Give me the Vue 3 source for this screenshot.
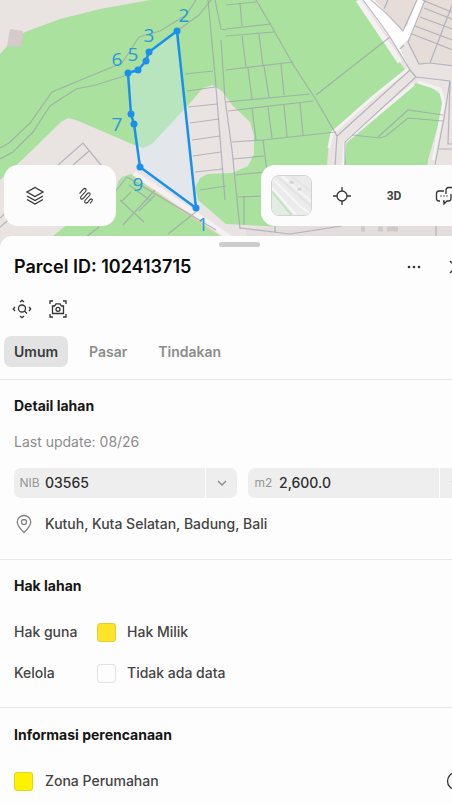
<script setup>
import { ref } from 'vue'

const tabs = ['Umum', 'Pasar', 'Tindakan']
const activeTab = ref('Umum')
const nib = ref('03565')
const area = ref('2,600.0')

const rights = [
  { label: 'Hak guna', value: 'Hak Milik', tone: 'amber' },
  { label: 'Kelola', value: 'Tidak ada data', tone: 'empty' },
]

const vertices = [
  [177, 31], [149, 52], [146, 61], [138, 70], [128, 73],
  [131, 114], [134, 124], [140, 167], [196, 208],
]
const outline = vertices.map(p => p.join(',')).join(' ')

const labels = [
  { n: '2', x: 184, y: 22 },
  { n: '3', x: 149, y: 42 },
  { n: '5', x: 133, y: 61 },
  { n: '6', x: 117, y: 66 },
  { n: '7', x: 117, y: 131 },
  { n: '9', x: 138, y: 191 },
  { n: '1', x: 203, y: 231 },
]
</script>

<template>
  <div class="viewport">
    <main class="page">
      <header class="map">
        <svg class="map-canvas" viewBox="0 0 479 250" preserveAspectRatio="xMinYMin slice" aria-hidden="true">
          <rect width="479" height="250" fill="#e9e3e2" />

          <!-- vegetation -->
          <g fill="#aae19f">
            <path d="M0 54 10 43 25 32 60 19 100 9 150 0H358L368 14 391 50 406 71 370 100 333 132 329 140 327 165V226L300 228 226 224 198 200 195 188 200 178 208 174 232 173 248 166 254 154V136L250 122 232 105 222 91 212 85 203 88 190 103 152 144 143 148 132 144 76 120 68 118 61 122 24 158 0 180Z" />
            <path d="M52 237 70 222 116 190 118 182 122 177 131 174 139 180 222 237Z" />
            <path d="M344 226V144L357 133 386 109 409 86 417 83 429 86 440 94 442 104 438 125 428 160 424 200V226Z" />
          </g>
          <path d="M10 29 23 31 21 47 7 46Z" fill="#d6cbcb" />
          <path d="M246 237V230L300 224H479V237Z" fill="#e4dddd" />

          <!-- roads -->
          <g fill="none" stroke="#f5f1f2">
            <path d="M134 173 196 214 232 239" stroke-width="5" />
            <path d="M408 69 372 98 332 133 329 148" stroke-width="3" />
            <path d="M414 84 345 142 343 165" stroke-width="3" />
            <path d="M358 0 381 34 400 62" stroke-width="5" />
            <path d="M418 82 440 89 444 102 433 160" stroke-width="3" />
          </g>
          <path d="M407 42 425 0H479V67L430 62 419 64Z" fill="#e6ddd9" />
          <path d="M373 0H417L404 30Z" fill="#e6dcd8" />
          <path d="M362 0H374L386 12 402 30 407 26 417 0H425L410 38 400 47 404 58 410 69 390 37Z" fill="#fefefe" />
          <path d="M132 176 214 233" fill="none" stroke="#f3c8a5" stroke-width="1" />

          <!-- cadastral lines -->
          <g fill="none" stroke="#999daa" stroke-opacity=".66" stroke-width="1.2">
            <path d="M0 148 9 143 30 123 52 92 88 77 122 63 139 37 160 31 186 15 196 0" />
            <path d="M0 159 13 152 33 132 50 106 76 89 96 85 127 75 M177 31 199 15 211 0" />
            <path d="M58 165 83 143 101 165M73 165 89 151" />
            <path d="M208 0 215 75 225 200M215 0 221 29 226 30M221 40 225 99 232 150 240 229" />
            <path d="M185 74 213 71M187 91 215 87M188 107 217 104M190 123 219 119M192 140 220 136M193 156 221 152M195 172 223 169M200 190 226 186" />
            <path d="M226 5 256 2M226 29 271 24M226 36 274 32M226 70 293 62M226 102 310 94M228 111 313 101M232 142 263 140 336 132M233 159 264 156M235 175 264 172M238 197 263 196M240 228 290 234 341 226V210" />
            <path d="M240 3 242 26M256 0 272 27 294 66 315 98 337 136 335 166M242 36 246 67M259 34 263 66M248 68 252 99M264 66 269 97M281 64 284 95M252 108 256 140M268 107 272 138M284 105 287 137M300 103 303 135M263 140 265 156 267 172M244 196V225M275 225V232" />
            <path d="M316 95 390 37M363 0 381 24 390 37 410 70 337 136M410 70 416 77 345 142V165M416 77 450 81 444 118 435 165" />
            <path d="M352 135 380 138 386 136 408 118 443 121M378 137 408 110 443 115M450 82 448 144H479M479 149H439" />
            <path d="M371 0 386 13 403 31 417 0M388 0 384 9M425 0 408 42 419 64 430 63 479 69M400 49 404 45M424 8 479 30M420 17 479 39M415 26 479 50M412 34 479 60M422 0 454 13M454 0 430 63" />
            <path d="M115 192 127 177 216 230M129 185 151 201M120 200 144 222M122 201 131 192M139 211 155 195M155 190 123 225M197 211 168 234M86 237 99 227M0 218 12 207M0 227 20 210M436 226V237" />
          </g>
          <path d="M361 229H365M378 229H383M387 229H398" stroke="#d1c8c7" stroke-width="5" />

          <polygon :points="outline" fill="#d6edff" fill-opacity=".32" stroke="#1a90ec" stroke-width="2.500" stroke-linejoin="round" />
          <circle v-for="(p, i) in vertices" :key="i" :cx="p[0]" :cy="p[1]" r="3.5" fill="#1a90ec" />
          <text v-for="l in labels" :key="l.n" class="vertex-label" :x="l.x" :y="l.y">{{ l.n }}</text>
        </svg>

        <div class="toolbar layer-tools">
          <button class="tool" aria-label="Lapisan">
            <svg width="20" height="20" viewBox="0 0 20 20">
              <path d="M10 1.500 18 6 10 10.500 2 6ZM2 10 10 14.500 18 10M2 13.500 10 18 18 13.500" />
            </svg>
          </button>
          <button class="tool" aria-label="Gambar">
            <svg class="thin" width="16" height="18" viewBox="0 0 16 18">
              <path d="M1.500 6.500 5.500 2C7.500 .5 9 2.500 7.500 4.500L3 9.500C1.800 11.500 3.500 13 5.200 11.500L9.500 6.500C11.500 4.800 13 6.500 11.500 8.500L7 13.500C6 15.500 7.800 17 9.500 15.500L12 12.500C13.500 11.200 15 12.500 14 14L12 16.500" />
            </svg>
          </button>
        </div>

        <div class="toolbar view-tools">
          <button class="basemap" aria-label="Peta dasar">
            <svg viewBox="0 0 40 40">
              <rect width="40" height="40" fill="#ebebeb" />
              <path d="M0 17 20 40H0Z" fill="#e3ece2" />
              <path d="M0 12 25 40M0 2 31 33 40 39M10 0 40 26" stroke="#f6f6f6" stroke-width="2" />
              <path d="M0 16 20 40" stroke="#bfe4bb" stroke-width="2" />
              <path d="M5 0 40 31M20 0 40 16" stroke="#e0e0e0" />
              <path d="M18 5H22V8H18ZM26 12H30V15H26Z" fill="#d5d5d5" />
            </svg>
          </button>
          <button class="tool" aria-label="Lokasi saya">
            <svg width="20" height="20" viewBox="0 0 20 20">
              <circle cx="10" cy="10" r="5" />
              <path d="M10 1V5M10 15V19M1 10H5M15 10H19" />
            </svg>
          </button>
          <button class="tool tool-3d">3D</button>
          <button class="tool" aria-label="Komentar">
            <svg width="22" height="20" viewBox="0 0 22 20">
              <path d="M9 5H4Q1.500 5 1.500 7.500V12.500Q1.500 15 4 15H5M11 8V4Q11 1.500 13.500 1.500H18.500Q21 1.500 21 4V8Q21 10.500 18.500 10.500M16 8V12.500Q16 15 13.500 15H12L9 18V15H8" />
              <path d="M5.500 10H6.500M8.500 10H9.500M11.500 10H12.500" />
            </svg>
          </button>
        </div>
      </header>

      <section class="sheet">
        <div class="handle"></div>

        <div class="title-row">
          <h1>Parcel ID: 102413715</h1>
          <button class="plain" aria-label="Lainnya">
            <svg class="solid" width="16" height="16" viewBox="0 0 16 16">
              <circle cx="3" cy="8" r="1.3" /><circle cx="8" cy="8" r="1.3" /><circle cx="13" cy="8" r="1.3" />
            </svg>
          </button>
          <button class="plain" aria-label="Tutup">
            <svg width="16" height="16" viewBox="0 0 16 16"><path d="M2 2 14 14M14 2 2 14" /></svg>
          </button>
        </div>

        <div class="actions">
          <button class="plain" aria-label="Perbesar ke lahan">
            <svg width="20" height="20" viewBox="0 0 20 20">
              <circle cx="10" cy="9.5" r="3.5" />
              <path d="M12.5 12 15 14.5M8 3 10 1.3 12 3M8 17 10 18.7 12 17M3 8 1.3 10 3 12M17 8 18.7 10 17 12" />
            </svg>
          </button>
          <button class="plain" aria-label="Tangkap gambar">
            <svg width="20" height="20" viewBox="0 0 20 20">
              <path d="M2 5V2H5M15 2H18V5M18 15V18H15M5 18H2V15" />
              <path d="M4.500 7H6.500L8 4.800H12L13.500 7H15.500V14.500H4.500Z" />
              <circle cx="10" cy="10.3" r="2" />
            </svg>
          </button>
        </div>

        <nav class="tabs" role="tablist">
          <button
            v-for="tab in tabs"
            :key="tab"
            role="tab"
            class="tab"
            :class="{ active: tab === activeTab }"
            :aria-selected="tab === activeTab"
            @click="activeTab = tab"
          >{{ tab }}</button>
        </nav>

        <section class="block detail">
          <h2>Detail lahan</h2>
          <p class="updated">Last update: 08/26</p>
          <div class="fields">
            <div class="field">
              <label for="nib">NIB</label>
              <input id="nib" v-model="nib" type="text">
              <button class="field-toggle" aria-label="Pilih NIB">
                <svg width="10" height="6" viewBox="0 0 10 6"><path d="M1 1 5 5 9 1" /></svg>
              </button>
            </div>
            <div class="field">
              <label for="area">m2</label>
              <input id="area" v-model="area" type="text">
              <button class="field-toggle" aria-label="Pilih satuan">
                <svg width="10" height="6" viewBox="0 0 10 6"><path d="M1 1 5 5 9 1" /></svg>
              </button>
            </div>
          </div>
          <div class="line">
            <svg class="pin" width="20" height="20" viewBox="0 0 20 20">
              <path d="M10 18.5C7.500 16 3.200 12 3.200 8A6.800 6.500 0 0 1 16.800 8C16.800 12 12.500 16 10 18.500Z" />
              <circle cx="10" cy="8" r="2.500" />
            </svg>
            <span>Kutuh, Kuta Selatan, Badung, Bali</span>
          </div>
        </section>

        <section class="block rights">
          <h2>Hak lahan</h2>
          <dl>
            <div v-for="r in rights" :key="r.label" class="right">
              <dt>{{ r.label }}</dt>
              <dd><span class="swatch" :class="r.tone"></span>{{ r.value }}</dd>
            </div>
          </dl>
        </section>

        <section class="block planning">
          <h2>Informasi perencanaan</h2>
          <div class="line">
            <span class="swatch yellow"></span>
            <span class="grow">Zona Perumahan</span>
            <button class="plain" aria-label="Info zona">
              <svg width="20" height="20" viewBox="0 0 20 20">
                <circle cx="10" cy="10" r="8.500" />
                <path d="M10 9V14M10 6V7" />
              </svg>
            </button>
          </div>
        </section>
      </section>
    </main>
  </div>
</template>

<style>
body {
  margin: 0;
  background: #fdfdfd;
}
</style>

<style scoped>
.viewport {
  overflow: hidden;
  font-family: Inter, "Liberation Sans", sans-serif;
  font-size: 14px;
  font-weight: 500;
  line-height: 20px;
  color: #444;
}

/* the panel is slightly wider than the window and runs off its right edge */
.page {
  width: calc(100% + 27px);
}

h1,
h2,
p,
dl,
dd {
  margin: 0;
}

button {
  border: none;
  background: none;
  padding: 0;
  font: inherit;
  color: inherit;
  cursor: pointer;
}

svg {
  display: block;
  fill: none;
  stroke: #333;
  stroke-width: 1.3;
}

.map {
  position: relative;
  display: flex;
  justify-content: space-between;
  padding: 165px 0 10px 4px;
}

.map-canvas {
  position: absolute;
  top: 0;
  left: 0;
  width: 100%;
  height: 250px;
  stroke: none;
}

.vertex-label {
  font-family: "Open Sans", sans-serif;
  font-size: 19px;
  font-weight: 400;
  text-anchor: middle;
  fill: #2a9ad6;
}

.toolbar {
  position: relative;
  display: flex;
  align-items: center;
  height: 61px;
  border-radius: 14px;
  background: #fcfcfc;
}

.layer-tools {
  padding: 0 5px;
}

.tool {
  display: flex;
  align-items: center;
  justify-content: center;
  width: 51px;
  height: 48px;
}

.thin {
  stroke-width: 1.1;
}

.view-tools {
  padding: 0 7px 0 10px;
}

.view-tools .tool {
  width: 52px;
}

.basemap {
  width: 41px;
  height: 41px;
  margin-right: 4px;
  border: 1px solid #d2d2d2;
  border-radius: 8px;
  overflow: hidden;
}

.basemap svg {
  stroke: none;
}

.tool-3d {
  font-family: Roboto, sans-serif;
  font-size: 12px;
  font-weight: 700;
}

.sheet {
  position: relative;
  background: #fdfdfd;
  border-radius: 12px 12px 0 0;
  padding-top: 6px;
}

.handle {
  width: 41px;
  height: 5px;
  margin: 0 auto;
  border-radius: 3px;
  background: #cccccc;
}

.title-row {
  display: flex;
  align-items: center;
  gap: 26px;
  padding: 8px 15px 0 14px;
}

h1 {
  flex: 1;
  font-size: 18px;
  line-height: 24px;
  font-weight: 600;
  color: #0c0c0c;
}

.solid {
  fill: #333;
  stroke: none;
}

.actions {
  display: flex;
  gap: 16px;
  padding: 20px 12px 0;
}

.tabs {
  display: flex;
  gap: 11px;
  padding: 17px 4px 12px;
  border-bottom: 1px solid #e8e8e8;
}

.tab {
  height: 31px;
  padding: 0 10px;
  border-radius: 7px;
  font-weight: 600;
  color: #8c8c8c;
}

.tab.active {
  background: #e3e3e3;
  color: #3a3a3a;
}

.block {
  padding: 16px 8px 0 14px;
}

.detail {
  padding-bottom: 25px;
  border-bottom: 1px solid #e8e8e8;
}

h2 {
  font-size: 14px;
  line-height: 20px;
  font-weight: 700;
  color: #161616;
}

.updated {
  margin-top: 16px;
  font-weight: 400;
  color: #8c8c8c;
}

.fields {
  display: flex;
  gap: 11px;
  margin: 16px 0;
}

.field {
  flex: 1;
  min-width: 0;
  display: flex;
  align-items: center;
  height: 30px;
  border-radius: 7px;
  background: #eeeeee;
}

.field label {
  width: 31px;
  text-align: center;
  font-size: 12px;
  font-weight: 400;
  color: #969696;
}

.field input {
  flex: 1;
  min-width: 0;
  border: none;
  padding: 0;
  background: none;
  font: inherit;
  color: #2e2e2e;
}

.field-toggle {
  display: flex;
  align-items: center;
  justify-content: center;
  width: 32px;
  height: 100%;
  border-left: 1px solid #fdfdfd;
}

.field-toggle svg {
  stroke: #8a8a8a;
}

.line {
  display: flex;
  align-items: center;
  gap: 11px;
}

.pin {
  stroke: #858585;
}

.swatch {
  box-sizing: border-box;
  width: 19px;
  height: 19px;
  border: 1px solid #e2e2e2;
  border-radius: 3px;
}

.amber {
  background: #fde428;
  border-color: #e3cf35;
}

.yellow {
  background: #fff200;
  border-color: #ded51e;
}

.rights {
  padding-bottom: 24px;
  border-bottom: 1px solid #e8e8e8;
}

.right {
  display: grid;
  grid-template-columns: 83px 1fr;
  margin-top: 21px;
}

.right:first-child {
  margin-top: 26px;
}

.right dd {
  display: flex;
  align-items: center;
  gap: 11px;
}

.planning {
  padding-top: 17px;
  padding-bottom: 13px;
}

.planning .line {
  gap: 12px;
  margin-top: 26px;
  padding-right: 5px;
}

.grow {
  flex: 1;
}
</style>
